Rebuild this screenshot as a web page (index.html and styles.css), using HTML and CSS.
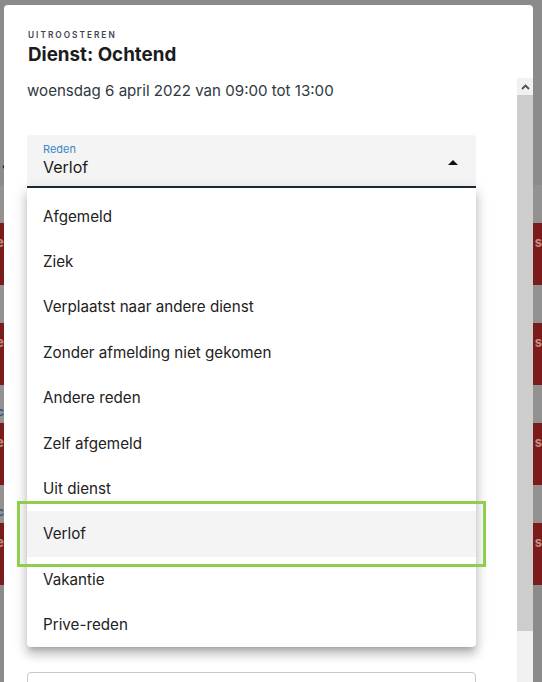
FILE: index.html
```html
<!DOCTYPE html>
<html lang="nl">

<head>
  <meta charset="UTF-8">
  <meta name="viewport" content="width=device-width, initial-scale=1.0">
  <title>Uitroosteren</title>
  <link rel="stylesheet" href="styles.css">
</head>

<body>
  <!-- page behind the dialog -->
  <div class="board">
    <div class="board-top"><span class="dot">•</span></div>
    <div class="gap"><span class="tick">:</span></div>
    <div class="bar"><span>e</span><span>s</span></div>
    <div class="gap"><span class="tick">:</span></div>
    <div class="bar"><span>e</span><span>s</span></div>
    <div class="gap"><span class="tick blue">c</span></div>
    <div class="bar"><span>e</span><span>s</span></div>
    <div class="gap"><span class="tick blue">c</span></div>
    <div class="bar"><span>e</span><span>s</span></div>
  </div>

  <div class="dialog">
    <div class="dialog-head">
      <div class="eyebrow">Uitroosteren</div>
      <h1>Dienst: Ochtend</h1>
    </div>

    <div class="dialog-body">
      <div class="content">
        <p class="when">woensdag 6 april 2022 van 09:00 tot 13:00</p>

        <div class="select-wrap">
          <div class="select">
            <div class="select-text">
              <div class="select-label">Reden</div>
              <div class="select-value">Verlof</div>
            </div>
            <svg class="select-arrow" width="10" height="5" viewBox="0 0 10 5">
              <polygon points="0,5 5,0 10,5" fill="#111"/>
            </svg>
          </div>

          <ul class="menu">
            <li>Afgemeld</li>
            <li>Ziek</li>
            <li>Verplaatst naar andere dienst</li>
            <li>Zonder afmelding niet gekomen</li>
            <li>Andere reden</li>
            <li>Zelf afgemeld</li>
            <li>Uit dienst</li>
            <li class="selected">Verlof</li>
            <li>Vakantie</li>
            <li>Prive-reden</li>
          </ul>
        </div>

        <div class="field-next"></div>
      </div>

      <div class="scrollbar">
        <div class="sb-btn">
          <svg width="9" height="6" viewBox="0 0 9 6">
            <path d="M1 5 L4.5 1.5 L8 5" fill="none" stroke="#505050" stroke-width="1.8"/>
          </svg>
        </div>
        <div class="sb-thumb"></div>
        <div class="sb-track"></div>
      </div>
    </div>
  </div>
</body>

</html>
```

FILE: styles.css
```css
html,
body {
  margin: 0;
  height: 100%;
  overflow: hidden;
}

body {
  font-family: Inter, "Noto Sans", sans-serif;
  background: #8b8b8b;
  position: relative;
}

/* page behind the dialog */
.board {
  display: flex;
  flex-direction: column;
}

.board-top {
  height: 185px;
}

.dot {
  display: block;
  padding: 158px 0 0 1px;
  font-size: 14px;
  line-height: 16px;
  color: #1b1b1b;
}

.gap {
  height: 38px;
  background: #929292;
  font-size: 12px;
  line-height: 14px;
}

.tick {
  display: block;
  padding: 20px 0 0 0;
  margin-left: -2px;
  color: #b48a4a;
  font-weight: 700;
}

.tick.blue {
  color: #3d5a78;
  margin-left: -3px;
}

.bar {
  height: 62px;
  background: #7b1b1b;
  display: flex;
  justify-content: space-between;
  font-size: 13px;
  font-weight: 700;
  line-height: 16px;
  color: rgba(255, 255, 255, 0.5);
}

.bar span {
  padding-top: 11px;
}

.bar span:first-child {
  margin-left: -4px;
}

/* dialog */
.dialog {
  position: absolute;
  left: 4px;
  top: 5px;
  width: 529px;
  bottom: -40px;
  background: #fff;
  border-radius: 4px 4px 0 0;
  display: flex;
  flex-direction: column;
}

.dialog-head {
  flex-shrink: 0;
  height: 73px;
  box-sizing: border-box;
  padding: 24px 24px 0 24px;
}

.eyebrow {
  font-size: 8.3px;
  line-height: 12px;
  font-weight: 600;
  letter-spacing: 2px;
  text-transform: uppercase;
  color: #3c4650;
}

h1 {
  margin: 3px 0 0;
  font-size: 18.8px;
  line-height: 22px;
  font-weight: 700;
  color: #1c1c1c;
}

.dialog-body {
  flex: 1;
  min-height: 0;
  display: flex;
  overflow: hidden;
}

.content {
  flex: 1;
  padding: 0 41px 0 23px;
}

.when {
  margin: 0;
  padding-top: 2.5px;
  font-size: 15.1px;
  line-height: 20px;
  color: #2f3842;
}

.select-wrap {
  position: relative;
  margin-top: 34.5px;
}

.select {
  display: flex;
  align-items: center;
  height: 51px;
  background: #f4f4f4;
  border-radius: 4px 4px 0 0;
  border-bottom: 2px solid #1f2b3a;
  padding: 0 18px 0 16px;
}

.select-text {
  flex: 1;
  align-self: flex-start;
  padding-top: 7px;
}

.select-label {
  font-size: 11px;
  line-height: 14px;
  color: #3a87c9;
}

.select-value {
  margin-top: 1px;
  font-size: 16px;
  line-height: 20px;
  color: #1a1a1a;
}

.select-arrow {
  margin-top: 3px;
}

.menu {
  position: absolute;
  top: 100%;
  left: 0;
  right: 0;
  z-index: 2;
  margin: 0;
  padding: 5.5px 0 0;
  list-style: none;
  background: #fff;
  border-radius: 0 0 4px 4px;
  box-shadow: 0 5px 5px -3px rgba(0, 0, 0, 0.2),
    0 8px 10px 1px rgba(0, 0, 0, 0.14),
    0 3px 14px 2px rgba(0, 0, 0, 0.12);
}

.menu li {
  height: 45.4px;
  display: flex;
  align-items: center;
  padding: 0 16px;
  font-size: 15.2px;
  color: #222;
}

.menu li.selected {
  background: #f4f4f4;
  outline: 3px solid #8fce4c;
  outline-offset: 7px;
}

.field-next {
  margin-top: 484px;
  height: 60px;
  border: 1px solid #c6c6c6;
  border-radius: 4px;
}

/* scrollbar of the dialog body */
.scrollbar {
  width: 16px;
  display: flex;
  flex-direction: column;
}

.sb-btn {
  height: 17px;
  background: #f1f1f1;
  display: flex;
  align-items: center;
  justify-content: center;
}

.sb-thumb {
  height: 536px;
  background: #cdcdcd;
}

.sb-track {
  flex: 1;
  background: #f1f1f1;
}
```
